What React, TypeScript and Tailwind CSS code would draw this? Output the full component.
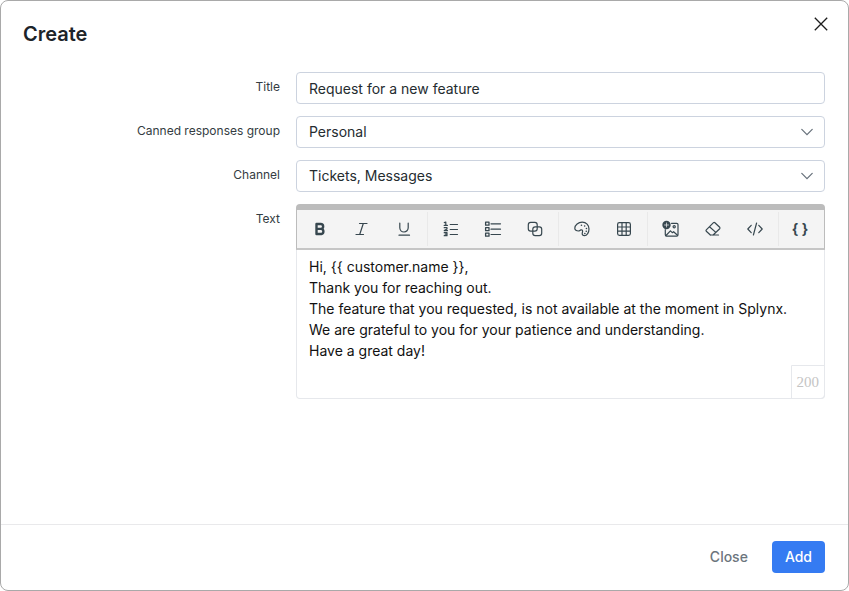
import type { ReactNode } from "react";

type Tool = {
  label: string;
  icon: ReactNode;
};

const toolGroups: Tool[][] = [
  [
    {
      label: "Bold",
      icon: (
        <path
          d="M4.5 3h4.2a2.4 2.4 0 0 1 0 4.9H4.5zM4.5 7.9h4.8a2.6 2.6 0 0 1 0 5.1H4.5z"
          strokeWidth="2.4"
        />
      ),
    },
    {
      label: "Italic",
      icon: <path d="M5.5 2.5H13M2 13.5h7.5M9.3 2.5 5.7 13.5" />,
    },
    {
      label: "Underline",
      icon: <path d="M3.8 2v4.8a4.2 4.2 0 0 0 8.4 0V2M3 14.2h10.5" />,
    },
  ],
  [
    {
      label: "Numbered list",
      icon: (
        <>
          <path d="M7.2 3.5h7.3M7.2 8.5h7.3M7.2 13.5h7.3" />
          <path
            d="M1.3 1.6 2.8 1v3.3M1.2 4.4h3.2M1.2 6.7H4v1.2L1.3 9.6h3.2M1.2 11.7H4v3H1.2M2.2 13.2H4"
            strokeWidth="1.2"
          />
        </>
      ),
    },
    {
      label: "Bulleted list",
      icon: (
        <>
          <path d="M6 2.8h9.5M6 8.2h9.5M6 13.5h9.5" />
          <path d="M.6 1.2H4v3H.6zM.6 6.7H4v3H.6zM.6 12.2H4v3H.6z" strokeWidth="1.3" />
        </>
      ),
    },
    {
      label: "Paragraph style",
      icon: (
        <>
          <rect x="1.3" y="1.3" width="8.9" height="8.9" rx="2.4" />
          <rect x="5.8" y="5.8" width="8.9" height="8.9" rx="2.4" />
        </>
      ),
    },
  ],
  [
    {
      label: "Text colour",
      icon: (
        <>
          <path d="M8.2 1.2c4 0 6.8 3 6.8 6.8 0 3.3-2 6.7-4.6 6.7-1.5 0-2.2-.8-2.2-2 0-1 .4-1.6.4-2.5 0-1-.8-1.5-1.7-1.3-.9.2-1.4 1.1-2.4 1.1C2.4 10 .8 9 .8 7.3c0-3.4 3.6-6.1 7.4-6.1z" />
          <path d="M7.4 4.3h.1M10.6 5h.1M12.4 7.5h.1M12.2 10.2h.1M10.8 12.4h.1" strokeWidth="1.5" />
        </>
      ),
    },
    {
      label: "Table",
      icon: (
        <>
          <rect x="1.6" y="1.6" width="12.8" height="12.8" rx="1.8" />
          <path d="M6 1.6v12.8M10.2 1.6v12.8M1.6 6h12.8M1.6 10.2h12.8" />
        </>
      ),
    },
  ],
  [
    {
      label: "Insert image",
      icon: (
        <>
          <path d="M8.5 2.3h5.2a1.3 1.3 0 0 1 1.3 1.3v10.2a1.3 1.3 0 0 1-1.3 1.3H3.6a1.3 1.3 0 0 1-1.3-1.3V8.5" />
          <path d="m3 14.5 4.4-4.7 1.9 1.9 1.3-1 3.9 3.6" />
          <circle cx="11.2" cy="5.7" r="1.1" />
          <circle cx="3.5" cy="4" r="4.2" fill="currentColor" stroke="none" />
          <path d="M3.5 2v4M1.5 4h4" stroke="#f4f4f4" strokeWidth=".7" />
        </>
      ),
    },
    {
      label: "Clear formatting",
      icon: (
        <path d="M5.2 14h8.3M5.4 14 1.3 10.3a1 1 0 0 1 0-1.4l7.2-7.2a1 1 0 0 1 1.4 0l4.8 4.6a1 1 0 0 1 0 1.4L8.1 14M4.5 5.8l6.3 5.6" />
      ),
    },
    {
      label: "Source code",
      icon: <path d="M4.2 4.3.8 8l3.4 3.7M11.8 4.3 15.2 8l-3.4 3.7M9.6 2 6.4 14" />,
    },
  ],
];

const message = `Hi, {{ customer.name }},
Thank you for reaching out.
The feature that you requested, is not available at the moment in Splynx.
We are grateful to you for your patience and understanding.
Have a great day!`;

const controlClass =
  "block h-8 w-full appearance-none rounded border border-[#ccd3df] bg-white px-3 text-sm text-[#252c30] outline-none";

type FieldProps = {
  id: string;
  label: string;
  children: ReactNode;
};

function Field({ id, label, children }: FieldProps) {
  return (
    <div className="flex gap-4">
      <label htmlFor={id} className="w-[257px] shrink-0 pt-1.5 text-right text-xs leading-[18px] text-[#343c42]">
        {label}
      </label>
      <div className="min-w-0 flex-1">{children}</div>
    </div>
  );
}

function SelectBox({ id, value }: { id: string; value: string }) {
  return (
    <div className="relative">
      <select id={id} className={controlClass}>
        <option>{value}</option>
      </select>
      <svg
        viewBox="0 0 12 12"
        className="pointer-events-none absolute top-2.5 right-3 size-3 text-[#66707a]"
        fill="none"
        stroke="currentColor"
        strokeWidth="1.2"
        strokeLinecap="round"
      >
        <path d="m.8 3.4 5.2 5.2 5.2-5.2" />
      </svg>
    </div>
  );
}

function Editor({ id }: { id: string }) {
  return (
    <div>
      <div className="flex h-[46px] rounded-t border border-t-[6px] border-b-2 border-[#bcbcbc] border-b-[#c6c6c6] bg-[#f4f4f4] py-0.5 text-[#37474f]">
        {toolGroups.map((group) => (
          <div key={group[0].label} className="flex border-r border-[#e9e9e9] px-0.5">
            {group.map((tool) => (
              <button
                key={tool.label}
                type="button"
                aria-label={tool.label}
                className="flex w-[42px] items-center justify-center"
              >
                <svg
                  viewBox="0 0 16 16"
                  className="size-4 overflow-visible"
                  fill="none"
                  stroke="currentColor"
                  strokeWidth="1.2"
                  strokeLinecap="round"
                  strokeLinejoin="round"
                >
                  {tool.icon}
                </svg>
              </button>
            ))}
          </div>
        ))}
        <button type="button" className="flex w-[42px] items-center justify-center text-sm font-bold">
          {"{ }"}
        </button>
      </div>
      <div className="relative">
        <textarea
          id={id}
          defaultValue={message}
          className="block h-[149px] w-full resize-none rounded-b border border-t-0 border-[#e6e8ec] bg-white px-3 py-1.5 text-sm leading-[21px] text-[#111111] outline-none"
        />
        <span className="absolute right-0 bottom-0 rounded-br border border-[#e6e8ec] px-[5px] py-1.5 font-['Liberation_Serif',serif] text-[15px] leading-5 text-[#c4c4c4]">
          200
        </span>
      </div>
    </div>
  );
}

export default function App() {
  return (
    <div
      role="dialog"
      aria-labelledby="dialog-title"
      className="flex min-h-screen flex-col rounded-lg border border-[#a9a9a9] bg-white font-['Inter',sans-serif]"
    >
      <header className="flex items-start justify-between pt-[15px] pr-5 pl-[22px]">
        <h1 id="dialog-title" className="pt-1 text-xl leading-7 font-semibold text-[#1d2429]">
          Create
        </h1>
        <button type="button" aria-label="Close dialog" className="pt-px text-[#1c1c1c]">
          <svg viewBox="0 0 14 14" className="size-3.5" fill="none" stroke="currentColor" strokeWidth="1.3">
            <path d="m.8.8 12.4 12.4M13.2.8.8 13.2" />
          </svg>
        </button>
      </header>

      <form className="flex flex-1 flex-col gap-3 px-[22px] pt-6 pr-[23px]">
        <Field id="title" label="Title">
          <input id="title" type="text" defaultValue="Request for a new feature" className={controlClass} />
        </Field>
        <Field id="group" label="Canned responses group">
          <SelectBox id="group" value="Personal" />
        </Field>
        <Field id="channel" label="Channel">
          <SelectBox id="channel" value="Tickets, Messages" />
        </Field>
        <Field id="text" label="Text">
          <Editor id="text" />
        </Field>
      </form>

      <footer className="flex justify-end gap-3 border-t border-[#e9e9eb] px-[23px] pt-4 pb-[17px]">
        <button type="button" className="h-8 rounded px-3 text-sm font-medium text-[#6c757d]">
          Close
        </button>
        <button type="button" className="h-8 rounded bg-[#357bf2] px-[13px] text-sm font-medium text-white">
          Add
        </button>
      </footer>
    </div>
  );
}
